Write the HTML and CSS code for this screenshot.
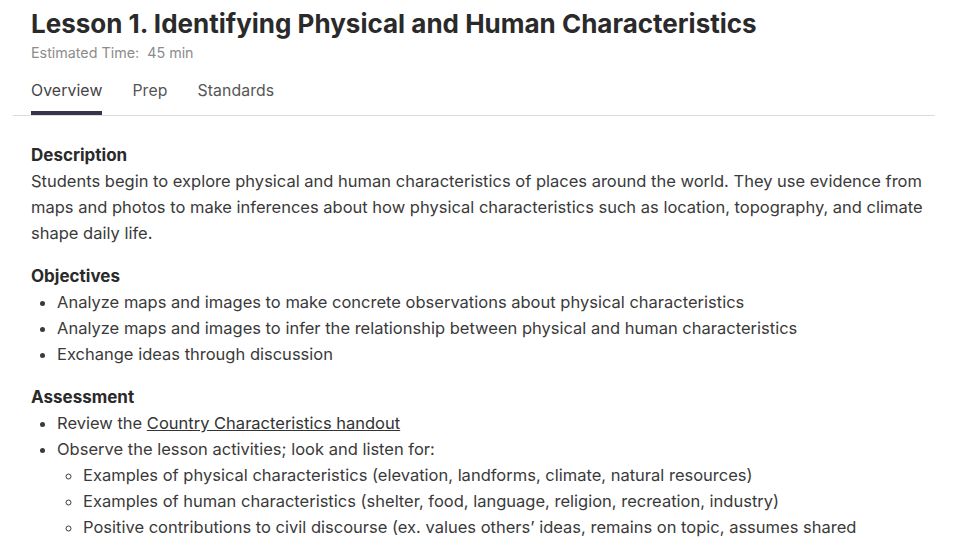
FILE: index.html
```html
<!DOCTYPE html>
<html lang="en">
<head>
  <meta charset="UTF-8">
  <title>Lesson 1. Identifying Physical and Human Characteristics</title>
  <link rel="stylesheet" href="styles.css">
</head>
<body>

  <div class="page">
    <header class="lesson-header">
      <h1>Lesson 1. Identifying Physical and Human Characteristics</h1>
      <p class="meta">Estimated Time:&nbsp; 45 min</p>
      <nav class="tabs">
        <a class="tab active" href="#">Overview</a>
        <a class="tab" href="#">Prep</a>
        <a class="tab" href="#">Standards</a>
      </nav>
    </header>

    <main class="overview">
      <section>
        <h2>Description</h2>
        <p>Students begin to explore physical and human characteristics of places around the world. They use evidence from maps and photos to make inferences about how physical characteristics such as location, topography, and climate shape daily life.</p>
      </section>

      <section>
        <h2>Objectives</h2>
        <ul>
          <li>Analyze maps and images to make concrete observations about physical characteristics</li>
          <li>Analyze maps and images to infer the relationship between physical and human characteristics</li>
          <li>Exchange ideas through discussion</li>
        </ul>
      </section>

      <section>
        <h2>Assessment</h2>
        <ul>
          <li>Review the <a href="#">Country Characteristics handout</a></li>
          <li>Observe the lesson activities; look and listen for:
            <ul>
              <li>Examples of physical characteristics (elevation, landforms, climate, natural resources)</li>
              <li>Examples of human characteristics (shelter, food, language, religion, recreation, industry)</li>
              <li>Positive contributions to civil discourse (ex. values others’ ideas, remains on topic, assumes shared understanding)</li>
            </ul>
          </li>
        </ul>
      </section>
    </main>
  </div>

</body>
</html>
```

FILE: styles.css
```css
html {
  background: #fff;
}

body {
  margin: 0;
  font-family: Inter, 'Noto Sans', sans-serif;
  color: #3a3a3a;
}

.page {
  padding: 0 25px 0 13px;
}

.lesson-header {
  padding-left: 18px;
  border-bottom: 1px solid #dcdcdc;
}

h1 {
  margin: 8px 0 0;
  font-size: 26px;
  line-height: 32px;
  font-weight: 700;
  color: #2a2a2a;
}

.meta {
  margin: 3px 0 0;
  font-size: 14.3px;
  line-height: 20px;
  color: #8c8c8c;
}

.tabs {
  display: flex;
  gap: 30px;
  margin-top: 16px;
}

.tab {
  font-size: 15.8px;
  line-height: 24px;
  letter-spacing: 0.1px;
  padding-bottom: 8px;
  border-bottom: 4px solid transparent;
  color: #555;
  text-decoration: none;
}

.tab.active {
  color: #444;
  border-bottom-color: #35344a;
}

.overview {
  padding: 26px 5px 0 18px;
  font-size: 16.5px;
  line-height: 26px;
}

section + section {
  margin-top: 17px;
}

h2 {
  margin: 0;
  font-size: 17px;
  line-height: 26px;
  font-weight: 700;
  color: #2a2a2a;
}

p {
  margin: 0;
}

ul {
  margin: 0;
  padding-left: 26px;
}

ul ul {
  list-style: circle;
}

a {
  color: #333;
}
```
